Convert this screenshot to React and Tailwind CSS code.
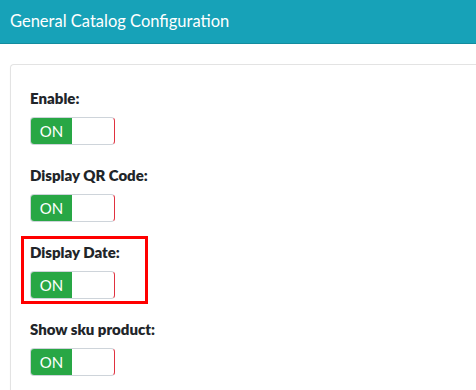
import React from "react";

const settings = [
    { label: "Enable:" },
    { label: "Display QR Code:" },
    { label: "Display Date:", highlight: true },
    { label: "Show sku product:" },
];

function Toggle() {
    return (
        <div className="flex h-[28px] w-[85px] overflow-hidden rounded-[4px] border border-y-[#ced4da] border-l-[#ced4da] border-r-[#e0313f] bg-white">
            <div className="flex w-[41px] items-center justify-center bg-[#28a745] text-[15px] text-white">
                ON
            </div>
            <div className="flex-1"></div>
        </div>
    );
}

export default function App() {
    return (
        <div className="h-[390px] overflow-hidden bg-white" style={{ fontFamily: "Lato, 'Noto Sans', sans-serif" }}>
            <div className="flex h-[44px] items-center border-b border-b-[#138c9e] bg-[#17a2b8] px-[10px]">
                <h1 className="text-[16.5px] text-white">General Catalog Configuration</h1>
            </div>
            <div className="pl-[10px] pt-[20px]">
                <div className="rounded-l-[4px] border border-r-0 border-[#e3e3e3] pb-[40px] pl-[19px] pt-[23px] shadow-[0_1px_2px_rgba(0,0,0,0.04)]">
                    <div className="flex flex-col gap-[20px]">
                        {settings.map((s) => (
                            <div key={s.label} className="relative flex flex-col gap-[9px]">
                                {s.highlight && (
                                    <div className="absolute left-[-9px] top-[-6px] h-[68px] w-[127px] border-[3px] border-[#ff0000]"></div>
                                )}
                                <label className="h-[20px] text-[15px] font-extrabold leading-[20px] text-[#212529]">
                                    {s.label}
                                </label>
                                <Toggle />
                            </div>
                        ))}
                    </div>
                </div>
            </div>
        </div>
    );
}
